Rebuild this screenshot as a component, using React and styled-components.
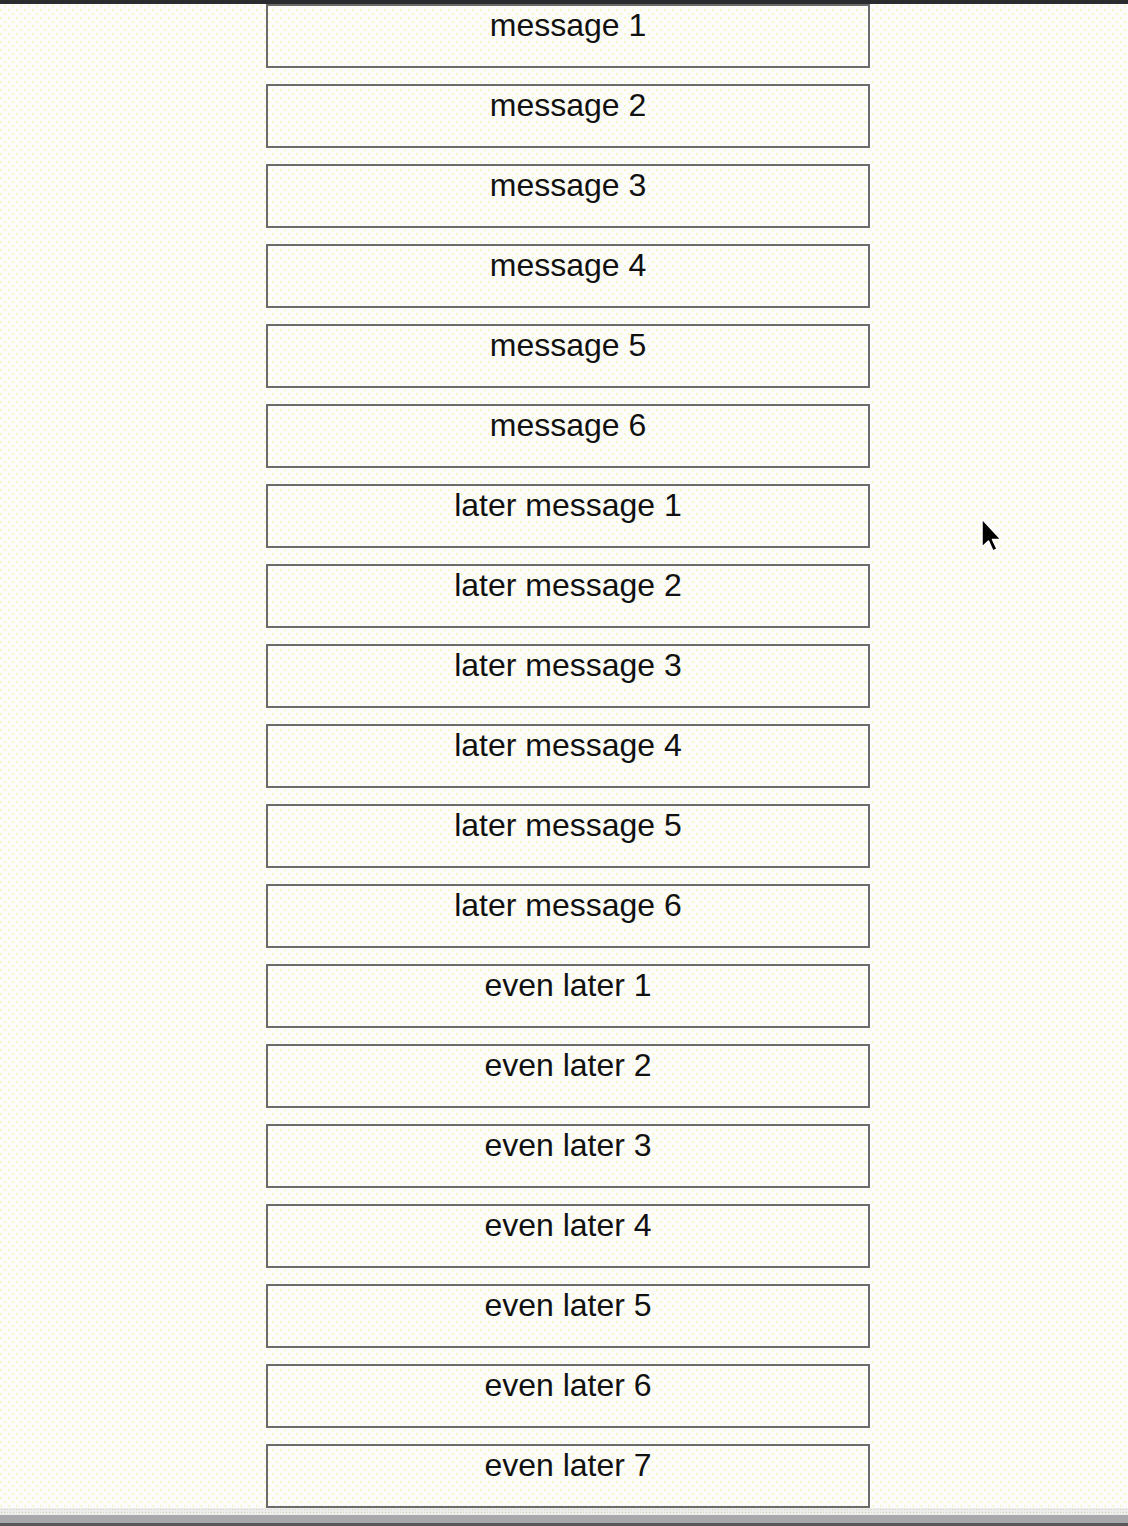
import styled, { createGlobalStyle } from 'styled-components';

const GlobalStyle = createGlobalStyle`
  html, body {
    margin: 0;
    padding: 0;
  }
  body {
    background-color: #fcfcfd;
    background-image:
      radial-gradient(circle, #f7f4a8 0.6px, transparent 0.9px),
      radial-gradient(circle, #f7f4a8 0.6px, transparent 0.9px);
    background-size: 8px 8px, 8px 8px;
    background-position: 1px 2px, 5px 6px;
    font-family: "Liberation Sans", Arial, sans-serif;
  }
`;

const Page = styled.div`
  position: relative;
  display: flex;
  flex-direction: column;
  min-height: 1526px;
`;

const TopBar = styled.div`
  height: 4px;
  background: #2a2b2f;
`;

const List = styled.div`
  display: flex;
  flex-direction: column;
  align-items: center;
  gap: 16px;
  padding-left: 8px;
`;

const MessageBox = styled.div`
  box-sizing: border-box;
  width: 604px;
  height: 64px;
  border: 2px solid #6b6b6b;
  text-align: center;
  font-size: 32px;
  color: #111;
  line-height: 36px;
  padding-top: 1px;
`;

const BottomBar = styled.div`
  margin-top: auto;
  height: 18px;
  display: flex;
  flex-direction: column;
`;

const Dither = styled.div`
  height: 7px;
  background-color: #ececec;
  background-image: radial-gradient(circle, #d6d4b0 0.8px, transparent 1px);
  background-size: 3px 3px;
`;

const Grey = styled.div`
  height: 8px;
  background: #a9a9ab;
`;

const Dark = styled.div`
  height: 3px;
  background: #58585c;
`;

const Cursor = styled.svg`
  position: absolute;
  left: 979px;
  top: 517px;
`;

const messages = [
  'message 1',
  'message 2',
  'message 3',
  'message 4',
  'message 5',
  'message 6',
  'later message 1',
  'later message 2',
  'later message 3',
  'later message 4',
  'later message 5',
  'later message 6',
  'even later 1',
  'even later 2',
  'even later 3',
  'even later 4',
  'even later 5',
  'even later 6',
  'even later 7',
];

const App = () => {
  return (
    <Page>
      <GlobalStyle />
      <TopBar />
      <List>
        {messages.map((m) => (
          <MessageBox key={m}>{m}</MessageBox>
        ))}
      </List>
      <BottomBar>
        <Dither />
        <Grey />
        <Dark />
      </BottomBar>
      <Cursor width="26" height="40" viewBox="0 0 26 40">
        <path
          d="M3 2 L3 30 L9.5 24 L14 34 L18 32 L13.5 22.5 L22 22.5 Z"
          fill="#000"
          stroke="#fff"
          strokeWidth="1.5"
          strokeLinejoin="round"
        />
      </Cursor>
    </Page>
  );
};

export default App;
